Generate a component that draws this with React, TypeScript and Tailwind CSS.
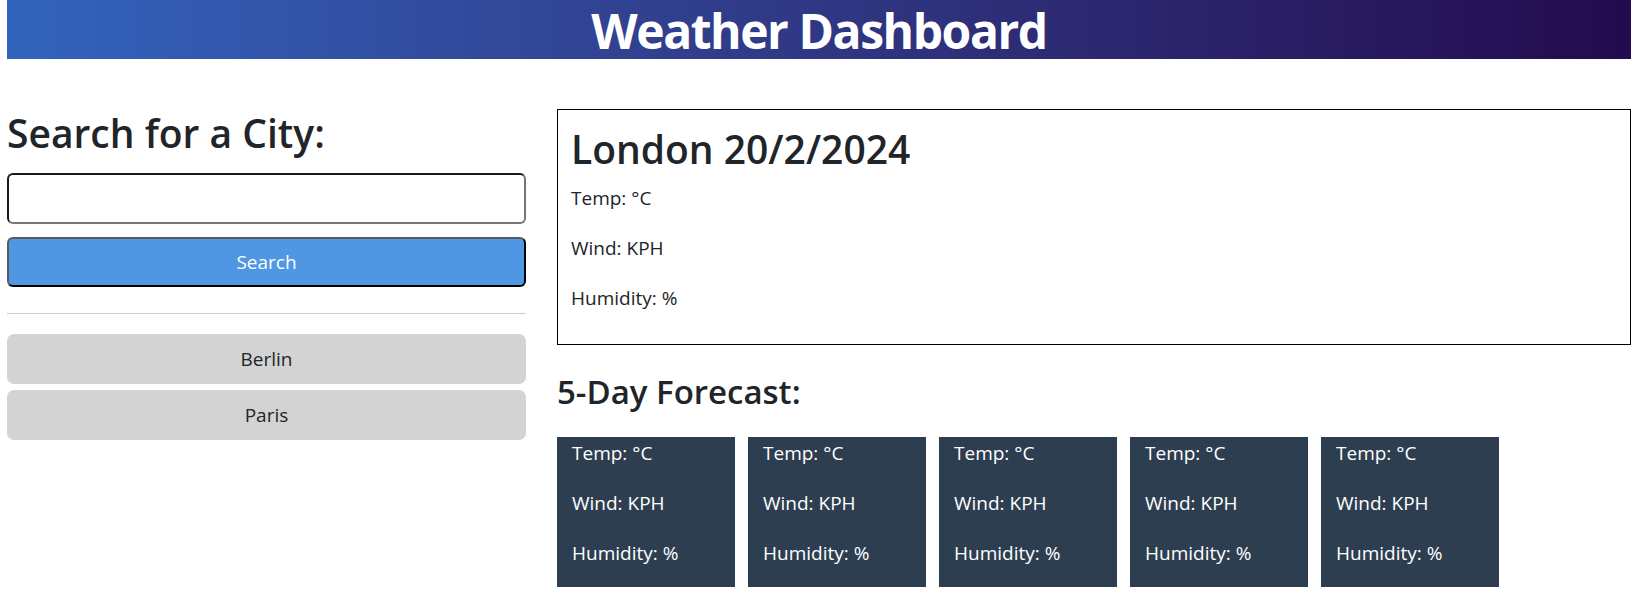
import React from 'react';

const font = { fontFamily: '"Open Sans", "Noto Sans", sans-serif' };

const history = ['Berlin', 'Paris'];
const forecast = [1, 2, 3, 4, 5];

const Stats: React.FC = () => (
  <>
    <p className="mb-[20px] leading-[30px]">Temp: °C</p>
    <p className="mb-[20px] leading-[30px]">Wind: KPH</p>
    <p className="mb-[20px] leading-[30px]">Humidity: %</p>
  </>
);

export default function App() {
  return (
    <div className="min-h-screen bg-white text-[19px] text-[#212529]" style={font}>
      <header className="ml-[7px] h-[59px] w-[1624px] bg-gradient-to-r from-[#3264bd] to-[#230a4e] text-center">
        <h1 className="pt-px text-[48px] font-bold leading-[59px] tracking-[-0.03em] text-white">Weather Dashboard</h1>
      </header>

      <main className="flex gap-[31px] pl-[7px] pt-[50px]">
        <aside className="w-[519px] shrink-0">
          <h2 className="mb-[16px] text-[39px] font-semibold leading-[48px]">Search for a City:</h2>
          <input
            type="text"
            className="block h-[51px] w-full rounded-[6px] border-2 border-t-[#1a1a1a] border-l-[#1a1a1a] border-b-[#767676] border-r-[#767676] bg-white px-3 outline-none"
          />
          <button
            type="button"
            className="mt-[13px] block h-[50px] w-full rounded-[6px] border-2 border-t-[#5a5a5a] border-l-[#5a5a5a] border-b-black border-r-black bg-[#4f96e3] text-white"
          >
            Search
          </button>
          <hr className="mb-[20px] mt-[26px] border-t border-[#cccccc]" />
          <div className="flex flex-col gap-[6px]">
            {history.map(city => (
              <button key={city} type="button" className="h-[50px] w-full rounded-[7px] bg-[#d3d3d3] text-[#212529]">
                {city}
              </button>
            ))}
          </div>
        </aside>

        <section className="w-[1074px] shrink-0">
          <div className="border border-black px-[13px] pb-[11px] pt-[15px]">
            <h2 className="mb-[10px] text-[39px] font-semibold leading-[48px]">London 20/2/2024</h2>
            <Stats />
          </div>

          <h3 className="mb-[24px] mt-[26px] text-[33px] font-semibold leading-[42px]">5-Day Forecast:</h3>
          <div className="flex gap-[13px]">
            {forecast.map(day => (
              <div key={day} className="h-[150px] w-[178px] bg-[#2d3e50] px-[15px] pt-px text-white">
                <Stats />
              </div>
            ))}
          </div>
        </section>
      </main>
    </div>
  );
}
